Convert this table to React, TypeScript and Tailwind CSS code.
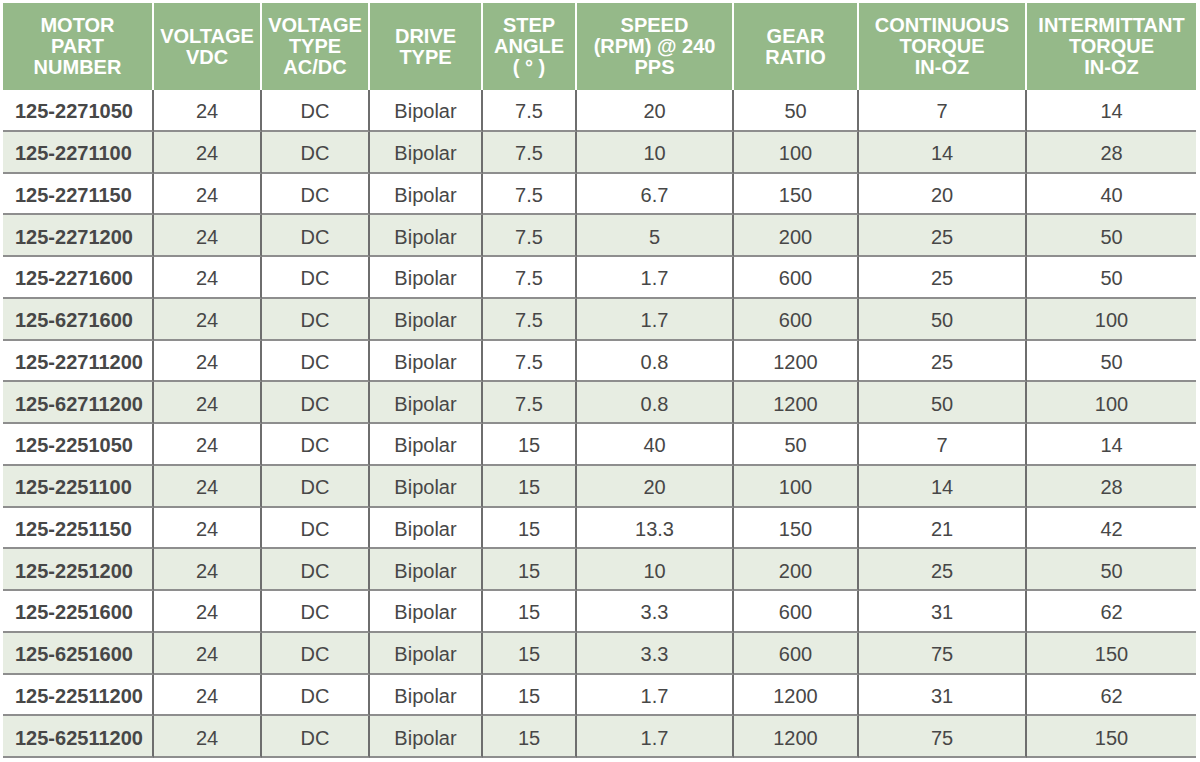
const headers = [
  ["MOTOR", "PART", "NUMBER"],
  ["VOLTAGE", "VDC"],
  ["VOLTAGE", "TYPE", "AC/DC"],
  ["DRIVE", "TYPE"],
  ["STEP", "ANGLE", "( ° )"],
  ["SPEED", "(RPM) @ 240", "PPS"],
  ["GEAR", "RATIO"],
  ["CONTINUOUS", "TORQUE", "IN-OZ"],
  ["INTERMITTANT", "TORQUE", "IN-OZ"],
]

const rows = [
  ["125-2271050", "7.5", "20", "50", "7", "14"],
  ["125-2271100", "7.5", "10", "100", "14", "28"],
  ["125-2271150", "7.5", "6.7", "150", "20", "40"],
  ["125-2271200", "7.5", "5", "200", "25", "50"],
  ["125-2271600", "7.5", "1.7", "600", "25", "50"],
  ["125-6271600", "7.5", "1.7", "600", "50", "100"],
  ["125-22711200", "7.5", "0.8", "1200", "25", "50"],
  ["125-62711200", "7.5", "0.8", "1200", "50", "100"],
  ["125-2251050", "15", "40", "50", "7", "14"],
  ["125-2251100", "15", "20", "100", "14", "28"],
  ["125-2251150", "15", "13.3", "150", "21", "42"],
  ["125-2251200", "15", "10", "200", "25", "50"],
  ["125-2251600", "15", "3.3", "600", "31", "62"],
  ["125-6251600", "15", "3.3", "600", "75", "150"],
  ["125-22511200", "15", "1.7", "1200", "31", "62"],
  ["125-62511200", "15", "1.7", "1200", "75", "150"],
]

export default () => {
  return (
    <div className="w-[1200px] h-[762px] bg-white pl-[3px] pt-[3px]" style={{ fontFamily: '"Liberation Sans", Arial, sans-serif' }}>
      <div className="grid w-[1193px] grid-cols-[151px_108px_108px_113px_94px_157px_125px_168px_169px]">
        {/*header*/}
        {headers.map((h, i) => (
          <div
            key={i}
            className={`h-[87px] bg-[#95b989] flex flex-col items-center justify-center text-white font-bold text-[20px] leading-[21px] text-center ${i < 8 ? "border-r-2 border-white" : ""}`}
          >
            {h.map((line, j) => (
              <span key={j} className="whitespace-nowrap">{line}</span>
            ))}
          </div>
        ))}

        {/*body*/}
        {rows.map((r, ri) => {
          const cells = [r[0], "24", "DC", "Bipolar", r[1], r[2], r[3], r[4], r[5]]
          const bg = ri % 2 === 1 ? "bg-[#e7ede2]" : "bg-white"
          return cells.map((c, ci) => (
            <div
              key={ri + "-" + ci}
              className={`h-[41.75px] flex items-center pt-[3px] text-[20px] text-[#474747] border-b-2 border-b-[#8e8e8e] ${bg} ${ci < 8 ? "border-r-2 border-r-[#6e6e6e]" : ""} ${ci === 0 ? "font-bold pl-[12px] text-[#3f3f3f]" : "justify-center"}`}
            >
              {c}
            </div>
          ))
        })}
      </div>
    </div>
  )
}
